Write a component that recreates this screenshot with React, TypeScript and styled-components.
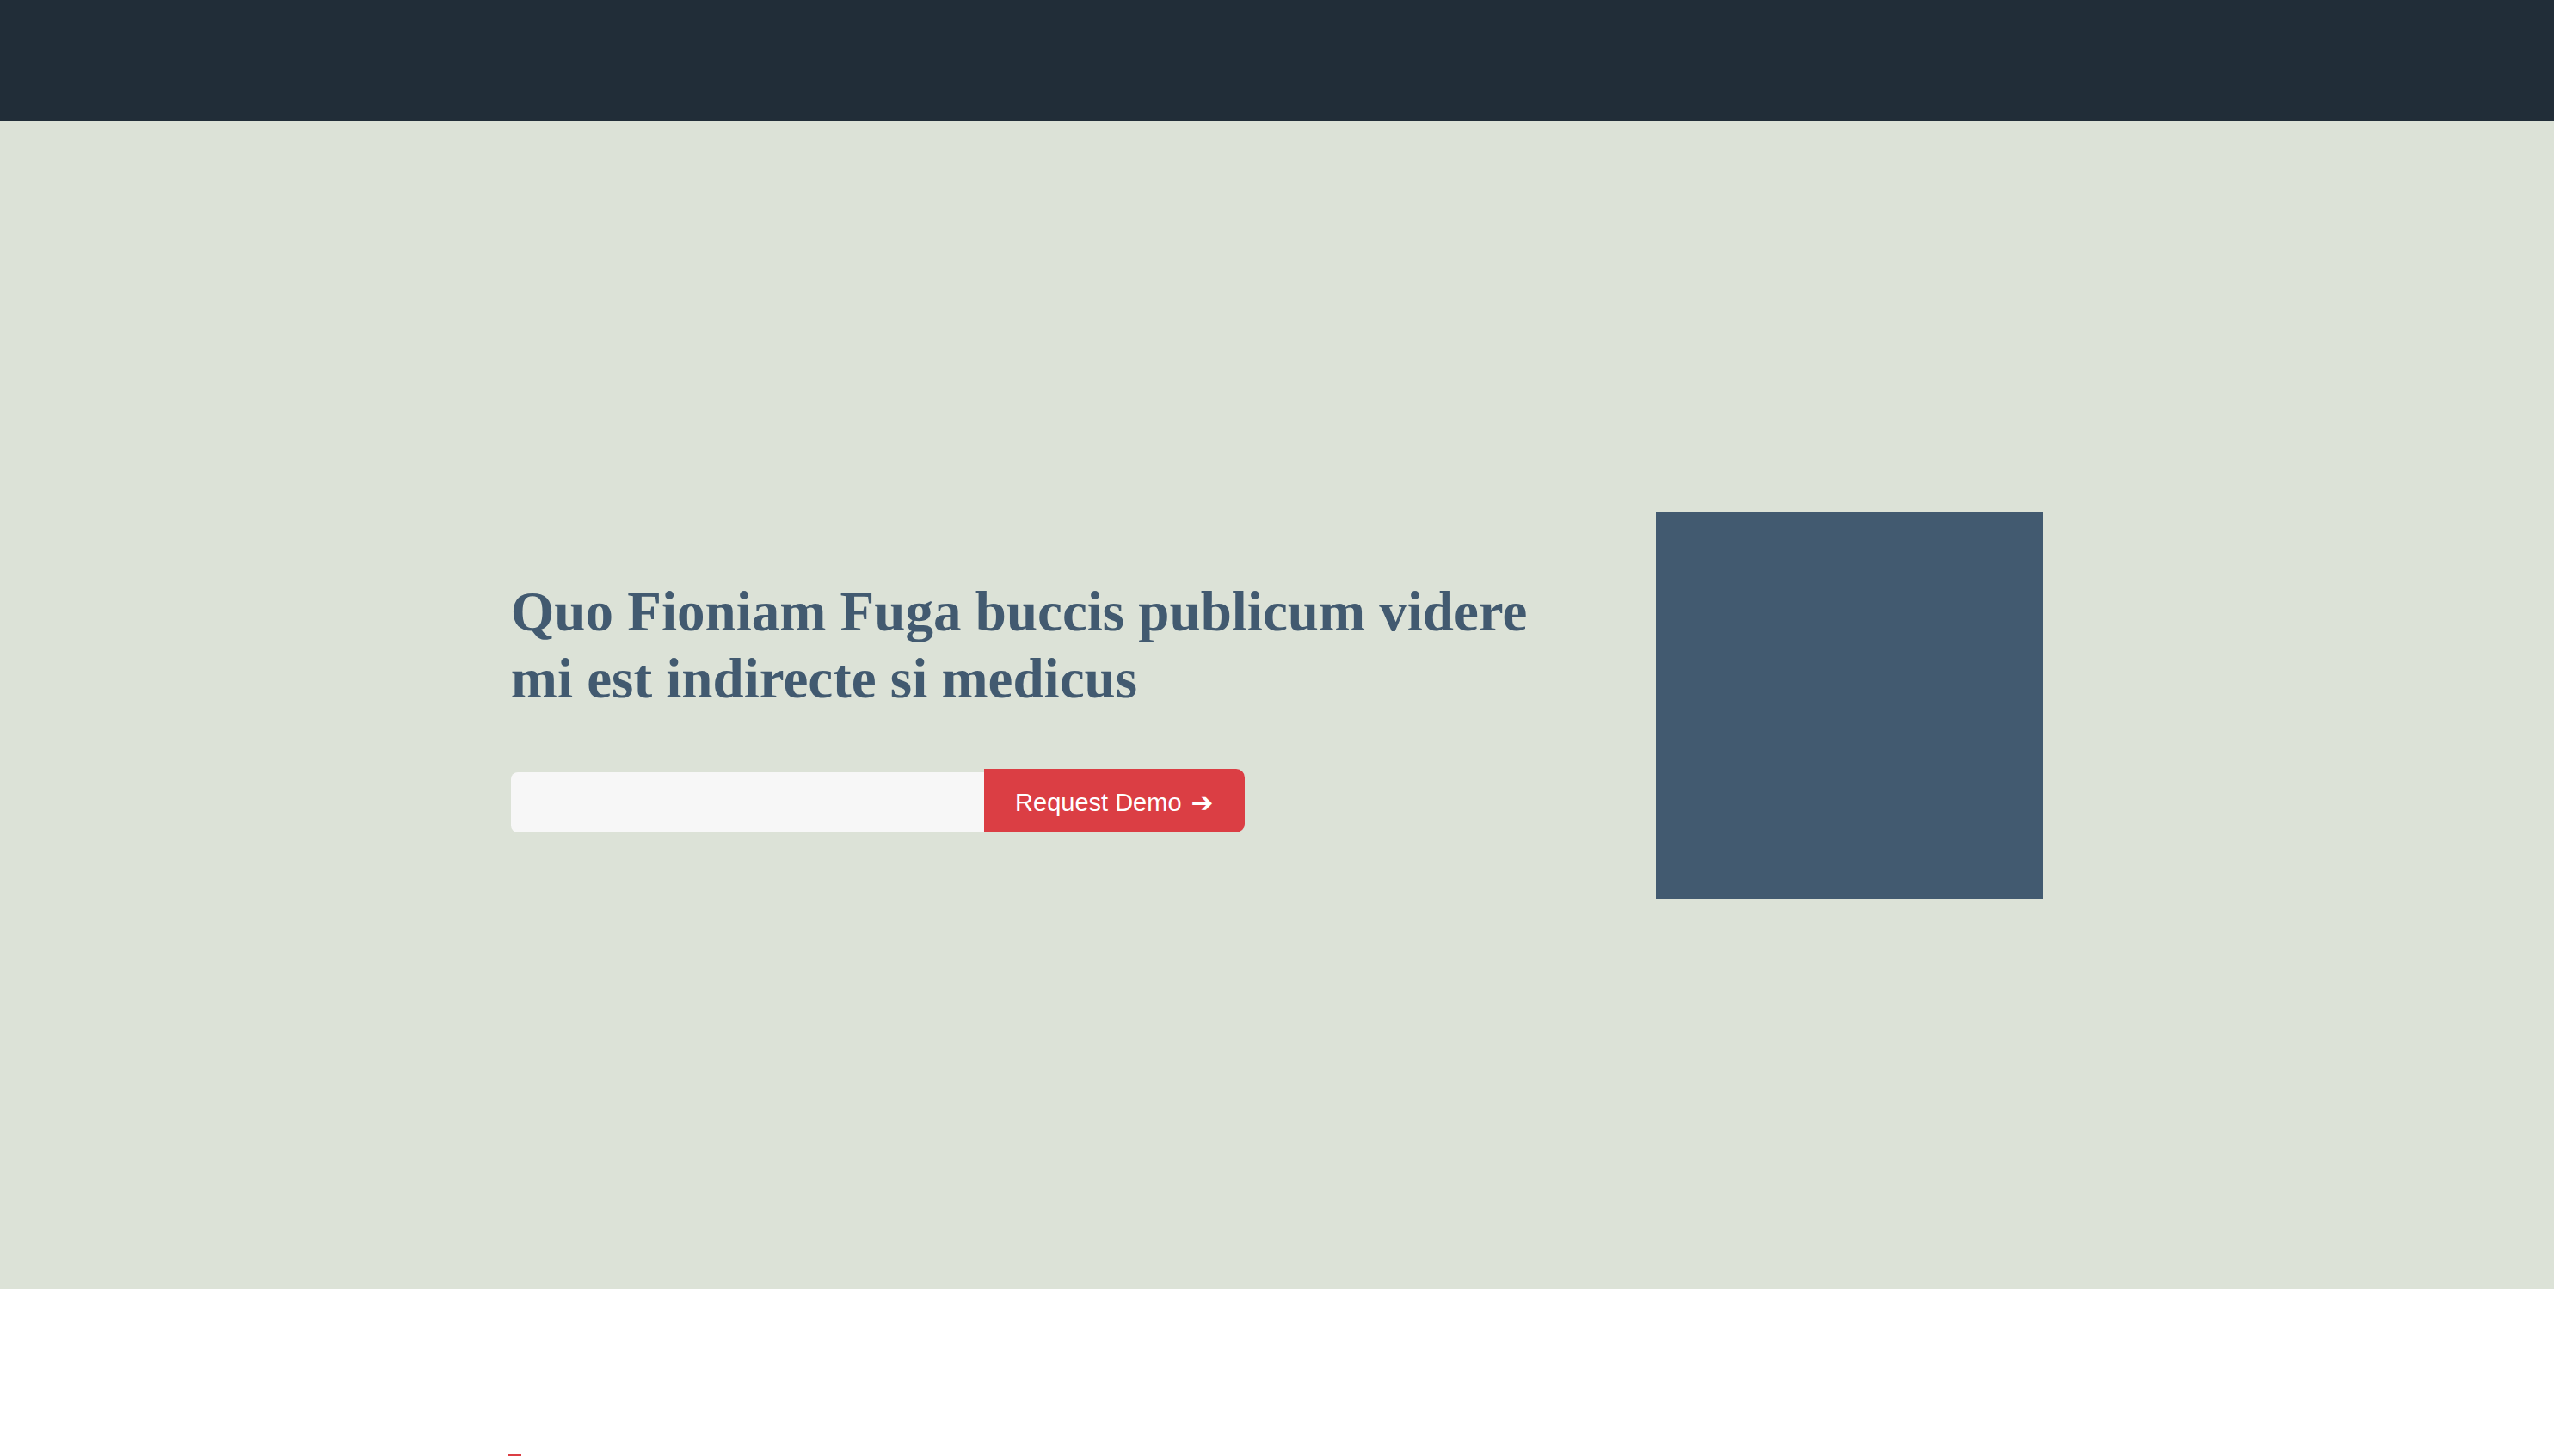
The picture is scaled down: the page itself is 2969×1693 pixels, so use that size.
import React from "react";
import styled, { createGlobalStyle } from "styled-components";

const GlobalStyle = createGlobalStyle`
  html, body {
    margin: 0;
    padding: 0;
    background: #ffffff;
    font-family: "Liberation Sans", Arial, sans-serif;
  }
  * { box-sizing: border-box; }
  ::-webkit-scrollbar {
    width: 3px;
    background: #f1f1f1;
  }
  ::-webkit-scrollbar-track {
    background: #f1f1f1;
    margin-top: 234px;
  }
  ::-webkit-scrollbar-thumb {
    background: #b9b9b9;
    border-left: 2px solid #f1f1f1;
  }
`;

const Page = styled.div`
  display: flex;
  flex-direction: column;
`;

const TopBar = styled.header`
  height: 141px;
  background: #212d38;
`;

const Hero = styled.section`
  height: 1358px;
  background: #dce2d7;
  display: flex;
  align-items: center;
  justify-content: center;
`;

const Container = styled.div`
  width: 60%;
  display: flex;
  align-items: center;
  justify-content: space-between;
`;

const TextColumn = styled.div`
  width: 1230px;
  display: flex;
  flex-direction: column;
`;

const Heading = styled.h1`
  margin: 0 0 66px 0;
  font-family: "Liberation Serif", "Times New Roman", serif;
  font-weight: 700;
  font-size: 65px;
  line-height: 78px;
  color: #425a70;
`;

const DemoForm = styled.form`
  display: flex;
  align-items: flex-end;
`;

const EmailInput = styled.input`
  width: 550px;
  height: 70px;
  border: none;
  outline: none;
  background: #f7f7f7;
  border-radius: 8px 0 0 8px;
  padding: 0 20px;
  font-family: "Liberation Sans", Arial, sans-serif;
  font-size: 24px;
`;

const DemoButton = styled.button`
  height: 74px;
  width: 303px;
  border: none;
  background: #db3e44;
  color: #ffffff;
  border-radius: 0 10px 10px 0;
  font-family: "Liberation Sans", Arial, sans-serif;
  font-size: 29px;
  display: flex;
  align-items: center;
  justify-content: center;
  gap: 11px;
  cursor: pointer;
  padding: 4px 0 0 0;
`;

const Arrow = styled.span`
  font-family: "DejaVu Sans", sans-serif;
  font-size: 31px;
  font-weight: 700;
`;

const ImageBox = styled.div`
  width: 450px;
  height: 450px;
  background: #425a70;
  flex-shrink: 0;
`;

const Features = styled.section`
  background: #ffffff;
  min-height: 8071px;
  padding-top: 192px;
  display: flex;
  justify-content: center;
`;

const FeaturesInner = styled.div`
  width: 60%;
`;

const Accent = styled.div`
  width: 15px;
  height: 5px;
  margin-left: -3px;
  background: #db3e44;
`;

export default function App() {
  return (
    <>
      <GlobalStyle />
      <Page>
        <TopBar />
        <Hero>
          <Container>
            <TextColumn>
              <Heading>Quo Fioniam Fuga buccis publicum videre mi est indirecte si medicus</Heading>
              <DemoForm onSubmit={(e) => e.preventDefault()}>
                <EmailInput type="email" aria-label="Email" />
                <DemoButton type="submit">
                  Request Demo <Arrow>➔</Arrow>
                </DemoButton>
              </DemoForm>
            </TextColumn>
            <ImageBox />
          </Container>
        </Hero>
        <Features>
          <FeaturesInner>
            <Accent />
          </FeaturesInner>
        </Features>
      </Page>
    </>
  );
}
